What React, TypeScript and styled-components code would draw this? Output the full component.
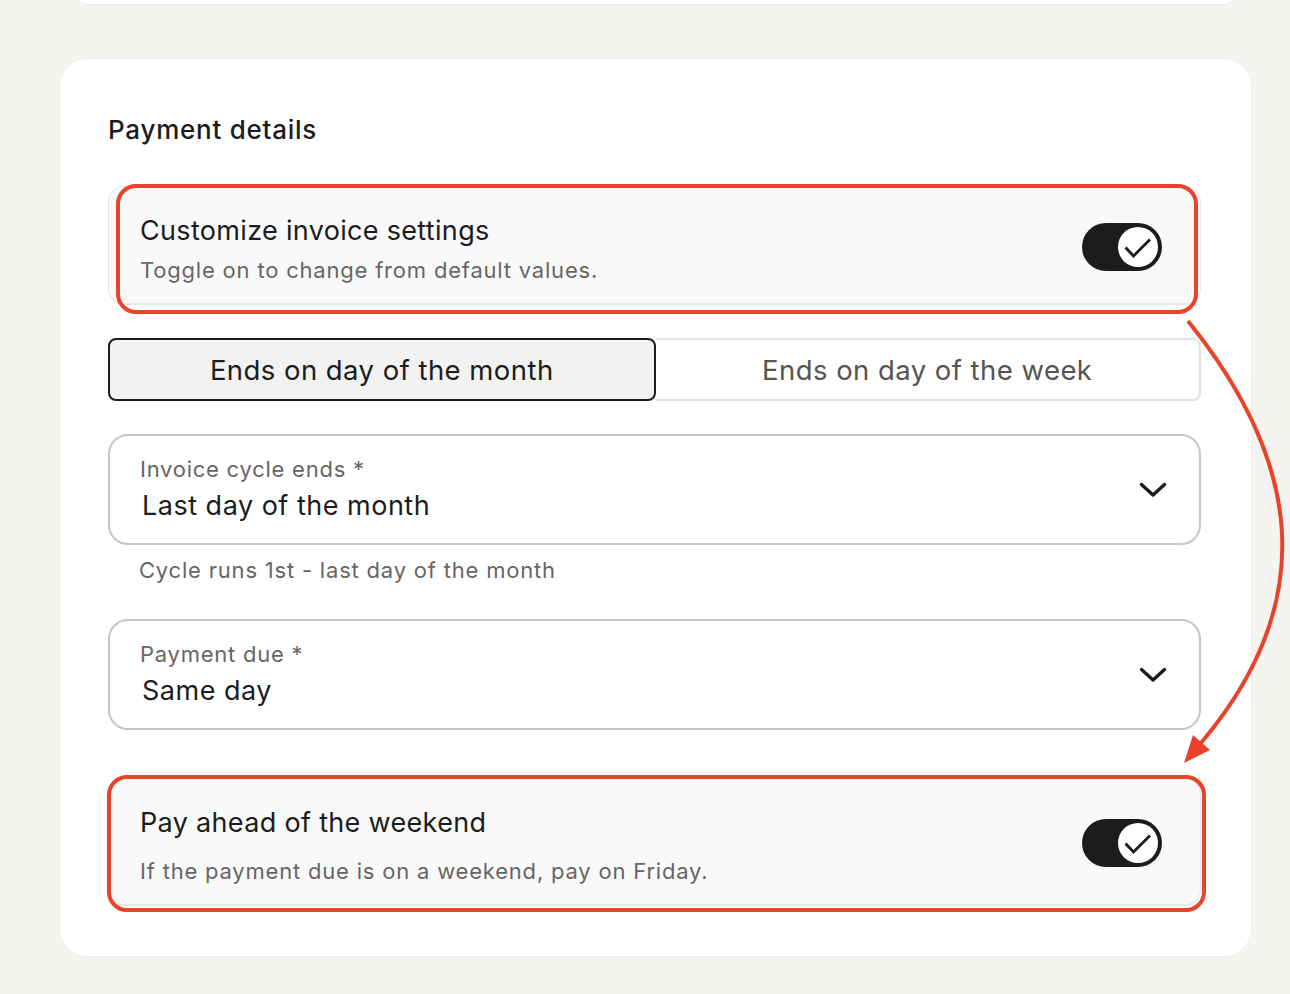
import React from 'react'
import styled, { createGlobalStyle } from 'styled-components'

const GlobalStyle = createGlobalStyle`
  html, body {
    margin: 0;
    padding: 0;
    background: #f5f4f1;
  }
  body {
    font-family: Inter, "Noto Sans", "Liberation Sans", sans-serif;
    color: #1c1c1c;
    -webkit-font-smoothing: antialiased;
  }
`

const Page = styled.div`
  width: 1290px;
  height: 994px;
  overflow: hidden;
  padding-left: 59px;
  box-sizing: border-box;
`

const PrevCard = styled.div`
  margin-top: -60px;
  margin-left: 11px;
  width: 1171px;
  height: 65px;
  background: #fff;
  border: 1px solid #ecebe8;
  border-radius: 18px;
  box-sizing: border-box;
`

const Card = styled.section`
  position: relative;
  margin-top: 53px;
  width: 1193px;
  background: #fff;
  border: 1px solid #efeeeb;
  border-radius: 28px;
  box-sizing: border-box;
  padding: 55px 50px 50px 48px;
`

const Heading = styled.h2`
  margin: 0 0 40px;
  font-size: 26px;
  line-height: 32px;
  font-weight: 450;
  letter-spacing: 0.75px;
`

const Stack = styled.div`
  display: flex;
  flex-direction: column;
`

const SettingWrap = styled.div<{ $mt?: number }>`
  position: relative;
  margin-top: ${(p) => p.$mt ?? 0}px;
`

const SettingBox = styled.div<{ $gap: number }>`
  display: flex;
  align-items: center;
  justify-content: space-between;
  background: #f9f9f9;
  border: 1px solid #e7e7e7;
  border-bottom-width: 2px;
  border-radius: 16px;
  padding: 27px 38px 18px 31px;
  gap: 24px;

  p + p {
    margin-top: ${(p) => p.$gap}px;
  }
`

const SettingText = styled.div`
  display: flex;
  flex-direction: column;
`

const Title = styled.p`
  margin: 0;
  font-size: 27px;
  line-height: 34px;
  letter-spacing: 0.32px;
  color: #1c1c1c;
`

const Sub = styled.p`
  margin: 0;
  font-size: 22px;
  line-height: 30px;
  letter-spacing: 0.8px;
  color: #666666;
`

const Highlight = styled.div<{ $l: number; $t: number; $r: number; $b: number }>`
  position: absolute;
  left: ${(p) => p.$l}px;
  top: ${(p) => p.$t}px;
  right: ${(p) => p.$r}px;
  bottom: ${(p) => p.$b}px;
  border: 4px solid #e8432b;
  border-radius: 20px;
  pointer-events: none;
`

const Track = styled.div`
  flex: none;
  width: 80px;
  height: 48px;
  margin-bottom: 6px;
  border-radius: 24px;
  background: #1c1c1c;
  display: flex;
  align-items: center;
  justify-content: flex-end;
  padding: 4px;
  box-sizing: border-box;
`

const Knob = styled.div`
  width: 40px;
  height: 40px;
  border-radius: 50%;
  background: #fff;
  display: flex;
  align-items: center;
  justify-content: center;
`

const Segmented = styled.div`
  display: flex;
  margin-top: 33px;
  height: 63px;
`

const Segment = styled.button<{ $active?: boolean }>`
  flex: 1;
  height: 63px;
  padding: 0;
  font-family: inherit;
  font-size: 27.5px;
  line-height: 34px;
  letter-spacing: 0.45px;
  cursor: pointer;
  box-sizing: border-box;
  color: ${(p) => (p.$active ? '#1c1c1c' : '#555555')};
  background: ${(p) => (p.$active ? '#f2f2f2' : '#ffffff')};
  border: 2px solid ${(p) => (p.$active ? '#1c1c1c' : '#e3e3e3')};
  border-radius: ${(p) => (p.$active ? '8px' : '0 8px 8px 0')};
  ${(p) => (p.$active ? '' : 'border-left: none;')}
`

const Select = styled.div<{ $mt: number }>`
  margin-top: ${(p) => p.$mt}px;
  height: 111px;
  box-sizing: border-box;
  border: 2px solid #c6c6c6;
  border-radius: 20px;
  display: flex;
  align-items: center;
  justify-content: space-between;
  padding: 0 32px 0 30px;
`

const SelectText = styled.div`
  display: flex;
  flex-direction: column;
  margin-top: -2px;
`

const Label = styled.span`
  font-size: 22px;
  line-height: 28px;
  letter-spacing: 0.75px;
  color: #666666;
`

const Value = styled.span`
  margin-top: 6px;
  margin-left: 2px;
  font-size: 27px;
  line-height: 34px;
  letter-spacing: 0.5px;
  color: #1c1c1c;
`

const Helper = styled.p`
  margin: 10px 0 0 31px;
  font-size: 22px;
  line-height: 30px;
  letter-spacing: 0.8px;
  color: #666666;
`

const Arrow = styled.svg`
  position: absolute;
  left: 0;
  top: 0;
  overflow: visible;
  pointer-events: none;
`

const Check = () => (
  <svg width="40" height="40" viewBox="0 0 40 40">
    <polyline
      points="8.5,21.5 15.5,29 31,13.5"
      fill="none"
      stroke="#1c1c1c"
      strokeWidth="2.8"
      strokeLinecap="square"
    />
  </svg>
)

const Toggle = () => (
  <Track>
    <Knob>
      <Check />
    </Knob>
  </Track>
)

const Chevron = () => (
  <svg width="28" height="16" viewBox="0 0 28 16">
    <polyline
      points="2.5,2.5 14,13 25.5,2.5"
      fill="none"
      stroke="#1c1c1c"
      strokeWidth="3.4"
      strokeLinecap="round"
      strokeLinejoin="round"
    />
  </svg>
)

export default function App() {
  return (
    <>
      <GlobalStyle />
      <Page>
        <PrevCard />
        <Card>
          <Heading>Payment details</Heading>
          <Stack>
            <SettingWrap>
              <SettingBox $gap={7}>
                <SettingText>
                  <Title>Customize invoice settings</Title>
                  <Sub>Toggle on to change from default values.</Sub>
                </SettingText>
                <Toggle />
              </SettingBox>
              <Highlight $l={8} $t={-2} $r={3} $b={-9} />
            </SettingWrap>

            <Segmented>
              <Segment $active>Ends on day of the month</Segment>
              <Segment>Ends on day of the week</Segment>
            </Segmented>

            <Select $mt={33}>
              <SelectText>
                <Label>Invoice cycle ends *</Label>
                <Value>Last day of the month</Value>
              </SelectText>
              <Chevron />
            </Select>
            <Helper>Cycle runs 1st - last day of the month</Helper>

            <Select $mt={34}>
              <SelectText>
                <Label>Payment due *</Label>
                <Value>Same day</Value>
              </SelectText>
              <Chevron />
            </Select>

            <SettingWrap $mt={48}>
              <SettingBox $gap={16}>
                <SettingText>
                  <Title>Pay ahead of the weekend</Title>
                  <Sub>If the payment due is on a weekend, pay on Friday.</Sub>
                </SettingText>
                <Toggle />
              </SettingBox>
              <Highlight $l={-1} $t={-3} $r={-5} $b={-6} />
            </SettingWrap>
          </Stack>

          <Arrow width="1193" height="897">
            <path
              d="M1128 262 C1241 402 1261 542 1141 684"
              fill="none"
              stroke="#e8432b"
              strokeWidth="4"
            />
            <polygon points="1124,704 1150,691 1133,676" fill="#e8432b" />
          </Arrow>
        </Card>
      </Page>
    </>
  )
}
